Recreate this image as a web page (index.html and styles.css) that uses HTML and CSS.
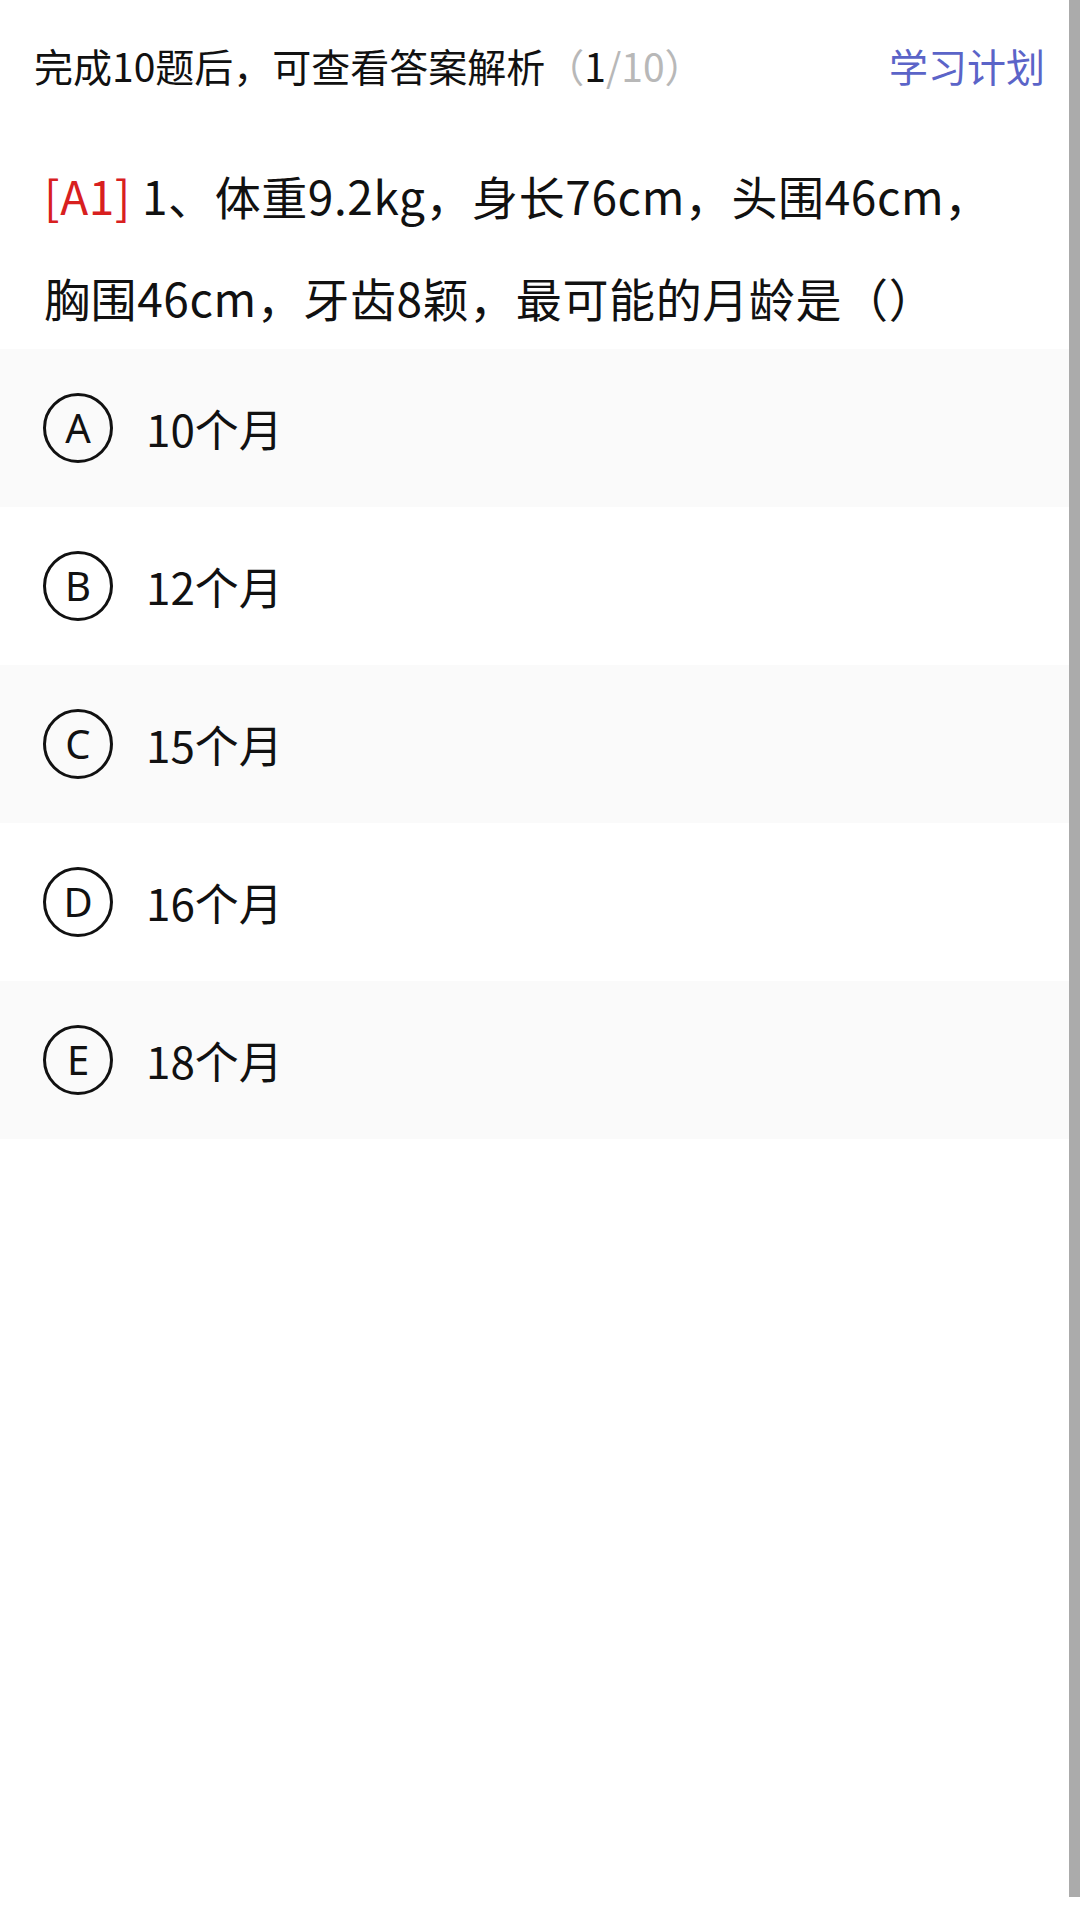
FILE: index.html
```html
<!DOCTYPE html>
<html lang="zh-CN">
<head>
<meta charset="utf-8">
<title>答题</title>
<link rel="stylesheet" href="styles.css">
</head>
<body>
<div class="page">
  <header class="top">
    <div class="progress">完成10题后，可查看答案解析<span class="count">（<span class="cur">1</span>/10）</span></div>
    <div class="plan">学习计划</div>
  </header>
  <div class="question">
    <div class="qline"><span class="tag">[A1]</span> 1、体重9.2kg，身长76cm，头围46cm，</div>
    <div class="qline">胸围46cm，牙齿8颖，最可能的月龄是（）</div>
  </div>
  <ul class="options">
    <li class="option shaded"><span class="mark">A</span><span class="label">10个月</span></li>
    <li class="option"><span class="mark">B</span><span class="label">12个月</span></li>
    <li class="option shaded"><span class="mark">C</span><span class="label">15个月</span></li>
    <li class="option"><span class="mark">D</span><span class="label">16个月</span></li>
    <li class="option shaded"><span class="mark">E</span><span class="label">18个月</span></li>
  </ul>
  <div class="scrollbar"></div>
</div>
</body>
</html>
```
FILE: styles.css
```css
html, body {
  margin: 0;
  padding: 0;
  background: #ffffff;
}
body {
  font-family: "Noto Sans CJK SC", "Noto Sans", sans-serif;
  color: #111111;
}
.page {
  position: relative;
  width: 1080px;
  height: 1920px;
  overflow: hidden;
}
.top {
  height: 130px;
  display: flex;
  align-items: center;
  justify-content: space-between;
  padding: 0 35px 0 34px;
  font-size: 39px;
}
.count {
  color: #b8b8b8;
}
.count .cur {
  color: #111111;
}
.plan {
  color: #5b64c8;
}
.question {
  padding: 14px 30px 0 44px;
  font-size: 46px;
  line-height: 102px;
  letter-spacing: 0.6px;
}
.qline {
  white-space: nowrap;
}
.tag {
  color: #d8201f;
}
.options {
  list-style: none;
  margin: 1px 0 0;
  padding: 0;
}
.option {
  height: 158px;
  display: flex;
  align-items: center;
  padding-left: 43px;
  background: #ffffff;
}
.option.shaded {
  background: #fafafa;
}
.mark {
  box-sizing: border-box;
  width: 70px;
  height: 70px;
  border: 3px solid #111111;
  border-radius: 50%;
  display: flex;
  align-items: center;
  justify-content: center;
  font-family: "Noto Sans", sans-serif;
  font-size: 40px;
  line-height: 1;
  margin-right: 33px;
}
.label {
  font-size: 44px;
}
.scrollbar {
  position: absolute;
  top: 0;
  right: 0;
  width: 11px;
  height: 1897px;
  background: #ababab;
}
```
